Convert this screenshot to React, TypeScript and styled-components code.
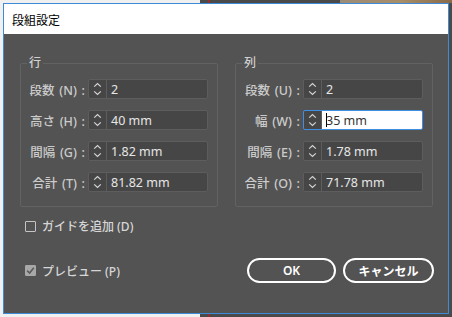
import React from 'react';
import styled, { createGlobalStyle } from 'styled-components';

const GlobalStyle = createGlobalStyle`
  html, body {
    margin: 0;
    padding: 0;
    background: #f0f0f0;
  }
  body {
    font-family: "Noto Sans", "Noto Sans CJK JP", sans-serif;
  }
`;

type Field = { label: string; value: string; focused?: boolean };

const rows: Field[] = [
  { label: '段数 (N) :', value: '2' },
  { label: '高さ (H) :', value: '40 mm' },
  { label: '間隔 (G) :', value: '1.82 mm' },
  { label: '合計 (T) :', value: '81.82 mm' },
];

const columns: Field[] = [
  { label: '段数 (U) :', value: '2' },
  { label: '幅 (W) :', value: '35 mm', focused: true },
  { label: '間隔 (E) :', value: '1.78 mm' },
  { label: '合計 (O) :', value: '71.78 mm' },
];

function SpinIcon() {
  return (
    <svg width="18" height="18" viewBox="0 0 18 18" fill="none">
      <path d="M5.5 6.5 L9 3.2 L12.5 6.5" stroke="#d4d4d4" strokeWidth="1.3" />
      <path d="M5.5 11.5 L9 14.8 L12.5 11.5" stroke="#d4d4d4" strokeWidth="1.3" />
    </svg>
  );
}

function FieldRow({ label, value, focused }: Field) {
  return (
    <Row>
      <Label>{label}</Label>
      <Spinner $focused={focused}>
        <SpinButton>
          <SpinIcon />
        </SpinButton>
        <Value $focused={focused}>
          {focused && <Caret />}
          {value}
        </Value>
      </Spinner>
    </Row>
  );
}

function Group({ title, fields }: { title: string; fields: Field[] }) {
  return (
    <GroupBox>
      <Legend>{title}</Legend>
      <Rows>
        {fields.map((f) => (
          <FieldRow key={f.label} {...f} />
        ))}
      </Rows>
    </GroupBox>
  );
}

export default function App(): JSX.Element {
  return (
    <>
      <GlobalStyle />
      <Desktop>
        <LightPane />
        <DarkPane />
        <Dialog>
          <TitleBar>段組設定</TitleBar>
          <Body>
            <Groups>
              <Group title="行" fields={rows} />
              <Group title="列" fields={columns} />
            </Groups>
            <CheckRow>
              <CheckBox />
              ガイドを追加 (D)
            </CheckRow>
            <Footer>
              <CheckRow>
                <CheckBox $checked>
                  <svg width="9" height="9" viewBox="0 0 9 9">
                    <path d="M1.2 4.6 L3.6 7 L7.8 1.8" stroke="#5a5a5a" strokeWidth="1.6" fill="none" />
                  </svg>
                </CheckBox>
                プレビュー (P)
              </CheckRow>
              <Buttons>
                <PillButton $width={89}>OK</PillButton>
                <PillButton $width={91}>キャンセル</PillButton>
              </Buttons>
            </Footer>
          </Body>
        </Dialog>
      </Desktop>
    </>
  );
}

const Desktop = styled.div`
  position: relative;
  width: 452px;
  height: 317px;
  display: flex;
  overflow: hidden;
`;

const LightPane = styled.div`
  width: 200px;
  background: #f0f0f0;
`;

const DarkPane = styled.div`
  flex: 1;
  background:
    linear-gradient(90deg, transparent 140px, #9c8c78 140px, #a88e6a 200px, #8a6a48 252px) top / 100% 3px no-repeat,
    linear-gradient(90deg, transparent 8px, #e01010 8px, #e01010 9px, transparent 9px),
    #4a4a4a;
`;

const Dialog = styled.div`
  position: absolute;
  left: 3px;
  top: 3px;
  width: 446px;
  height: 311px;
  box-sizing: border-box;
  border: 1px solid #3c8ad8;
  background: #535353;
  display: flex;
  flex-direction: column;
`;

const TitleBar = styled.div`
  height: 30px;
  flex-shrink: 0;
  background: #ffffff;
  color: #000000;
  font-family: "Noto Sans CJK JP", sans-serif;
  font-size: 12px;
  display: flex;
  align-items: center;
  padding-left: 8px;
`;

const Body = styled.div`
  flex: 1;
  padding: 22px 14px 0 16px;
  display: flex;
  flex-direction: column;
`;

const Groups = styled.div`
  display: flex;
  gap: 17px;
`;

const GroupBox = styled.fieldset`
  margin: 0;
  width: 198px;
  box-sizing: border-box;
  border: 1px solid #626262;
  border-radius: 2px;
  padding: 9px 0 14px 0;
  min-width: 0;
`;

const Legend = styled.legend`
  margin-left: 6px;
  padding: 0 2px;
  font-size: 12px;
  line-height: 14px;
  font-weight: 500;
  color: #d0d0d0;
`;

const Rows = styled.div`
  display: flex;
  flex-direction: column;
  gap: 11px;
`;

const Row = styled.div`
  display: flex;
  align-items: center;
  height: 20px;
`;

const Label = styled.span`
  width: 67px;
  box-sizing: border-box;
  padding-right: 3px;
  text-align: right;
  font-size: 12.5px;
  word-spacing: 1.5px;
  font-weight: 500;
  color: #cbcbcb;
  white-space: nowrap;
`;

const Spinner = styled.div<{ $focused?: boolean }>`
  width: 120px;
  height: 20px;
  box-sizing: border-box;
  display: flex;
  border: 1px solid ${(p) => (p.$focused ? '#3f8fe6' : '#5d5d5d')};
  border-radius: 2px;
  background: #464646;
  overflow: hidden;
`;

const SpinButton = styled.div`
  width: 17px;
  flex-shrink: 0;
  display: flex;
  align-items: center;
  justify-content: center;
  border-right: 1px solid #5d5d5d;
`;

const Value = styled.div<{ $focused?: boolean }>`
  flex: 1;
  display: flex;
  align-items: center;
  padding-left: 4px;
  font-size: 12.5px;
  color: ${(p) => (p.$focused ? '#333333' : '#e6e6e6')};
  background: ${(p) => (p.$focused ? '#ffffff' : 'transparent')};
`;

const Caret = styled.span`
  width: 1px;
  height: 14px;
  background: #000000;
  margin-right: -1px;
`;

const CheckRow = styled.label`
  display: flex;
  align-items: center;
  gap: 6px;
  padding-left: 5px;
  height: 18px;
  margin-top: 10px;
  font-size: 12px;
  font-weight: 500;
  color: #d6d6d6;
`;

const CheckBox = styled.span<{ $checked?: boolean }>`
  width: 11px;
  height: 11px;
  box-sizing: border-box;
  display: flex;
  align-items: center;
  justify-content: center;
  border: 1px solid ${(p) => (p.$checked ? '#a8a8a8' : '#c4c4c4')};
  background: ${(p) => (p.$checked ? '#a8a8a8' : 'transparent')};
  border-radius: 1px;
`;

const Footer = styled.div`
  display: flex;
  align-items: center;
  justify-content: space-between;
  margin-top: 23px;
  ${CheckRow} {
    margin-top: 0;
  }
`;

const Buttons = styled.div`
  display: flex;
  gap: 7px;
`;

const PillButton = styled.button<{ $width: number }>`
  width: ${(p) => p.$width}px;
  height: 25px;
  box-sizing: border-box;
  border: 2px solid #ffffff;
  border-radius: 13px;
  background: transparent;
  color: #ffffff;
  font-family: "Noto Sans", "Noto Sans CJK JP", sans-serif;
  font-size: 12px;
  font-weight: 600;
  padding: 0;
`;
